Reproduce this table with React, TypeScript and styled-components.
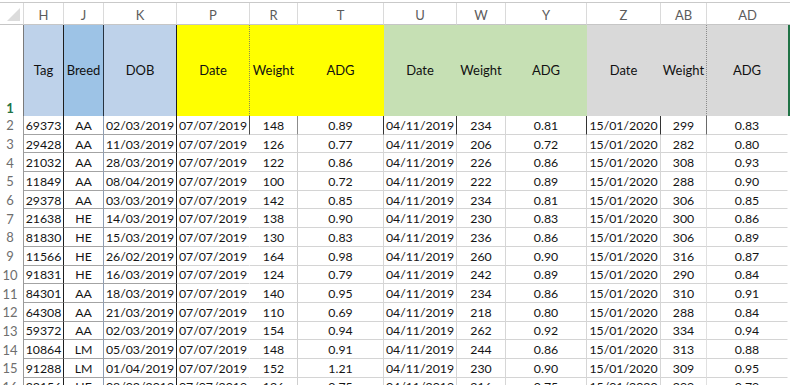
import React from 'react'
import styled, { createGlobalStyle } from 'styled-components'

const GlobalStyle = createGlobalStyle`
    html, body {
        margin: 0;
        padding: 0;
        background: #ffffff;
    }
    body {
        font-family: Lato, "Liberation Sans", sans-serif;
        overflow: hidden;
    }
`;

type Column = {
    letter: string
    title: string
    width: number
    bg: string
    headEdge: string
    bodyEdge: string
    firstEdge: string
    line: string
}

const BLUE = '#bed2ea'
const BLUE_DARK = '#9dc3e6'
const YELLOW = '#ffff00'
const GREEN = '#c6e0b4'
const GREY = '#d9d9d9'

const columns: Column[] = [
    { letter: 'H', title: 'Tag', width: 40, bg: BLUE, headEdge: '1px solid #1e1e1e', bodyEdge: '1px solid #1e1e1e', firstEdge: '1px solid #1e1e1e', line: '#a3a3a3' },
    { letter: 'J', title: 'Breed', width: 40, bg: BLUE_DARK, headEdge: '1px solid #26323f', bodyEdge: '1px solid #8d9db3', firstEdge: '1px solid #8d9db3', line: '#a3a3a3' },
    { letter: 'K', title: 'DOB', width: 73, bg: BLUE, headEdge: '1px solid #1e1e1e', bodyEdge: '1px solid #1e1e1e', firstEdge: '1px solid #1e1e1e', line: '#a3a3a3' },
    { letter: 'P', title: 'Date', width: 73, bg: YELLOW, headEdge: '1px dotted #8a8a55', bodyEdge: '1px solid #ffffff', firstEdge: '1px solid #4a4a4a', line: '#d4d4d4' },
    { letter: 'R', title: 'Weight', width: 48, bg: YELLOW, headEdge: `1px solid ${YELLOW}`, bodyEdge: '1px solid #cfcfcf', firstEdge: '1px solid #8c8c8c', line: '#d4d4d4' },
    { letter: 'T', title: 'ADG', width: 86, bg: YELLOW, headEdge: `1px solid ${YELLOW}`, bodyEdge: '1px solid #d6d6d6', firstEdge: '1px solid #333333', line: '#d4d4d4' },
    { letter: 'U', title: 'Date', width: 73, bg: GREEN, headEdge: `1px solid ${GREEN}`, bodyEdge: '1px solid #d6d6d6', firstEdge: '1px solid #333333', line: '#d4d4d4' },
    { letter: 'W', title: 'Weight', width: 49, bg: GREEN, headEdge: `1px solid ${GREEN}`, bodyEdge: '1px solid #d6d6d6', firstEdge: '1px solid #d6d6d6', line: '#d4d4d4' },
    { letter: 'Y', title: 'ADG', width: 81, bg: GREEN, headEdge: `1px solid ${GREEN}`, bodyEdge: '1px solid #d6d6d6', firstEdge: '1px solid #333333', line: '#d4d4d4' },
    { letter: 'Z', title: 'Date', width: 74, bg: GREY, headEdge: `1px solid ${GREY}`, bodyEdge: '1px solid #d6d6d6', firstEdge: '1px solid #333333', line: '#d4d4d4' },
    { letter: 'AB', title: 'Weight', width: 46, bg: GREY, headEdge: '1px dotted #8a8a8a', bodyEdge: '1px solid #e0e0e0', firstEdge: '1px solid #6a6a6a', line: '#d4d4d4' },
    { letter: 'AD', title: 'ADG', width: 81, bg: GREY, headEdge: `1px solid ${GREY}`, bodyEdge: '1px solid #ffffff', firstEdge: '1px solid #ffffff', line: '#d4d4d4' },
]

const rows: string[][] = [
    ['69373', 'AA', '02/03/2019', '07/07/2019', '148', '0.89', '04/11/2019', '234', '0.81', '15/01/2020', '299', '0.83'],
    ['29428', 'AA', '11/03/2019', '07/07/2019', '126', '0.77', '04/11/2019', '206', '0.72', '15/01/2020', '282', '0.80'],
    ['21032', 'AA', '28/03/2019', '07/07/2019', '122', '0.86', '04/11/2019', '226', '0.86', '15/01/2020', '308', '0.93'],
    ['11849', 'AA', '08/04/2019', '07/07/2019', '100', '0.72', '04/11/2019', '222', '0.89', '15/01/2020', '288', '0.90'],
    ['29378', 'AA', '03/03/2019', '07/07/2019', '142', '0.85', '04/11/2019', '234', '0.81', '15/01/2020', '306', '0.85'],
    ['21638', 'HE', '14/03/2019', '07/07/2019', '138', '0.90', '04/11/2019', '230', '0.83', '15/01/2020', '300', '0.86'],
    ['81830', 'HE', '15/03/2019', '07/07/2019', '130', '0.83', '04/11/2019', '236', '0.86', '15/01/2020', '306', '0.89'],
    ['11566', 'HE', '26/02/2019', '07/07/2019', '164', '0.98', '04/11/2019', '260', '0.90', '15/01/2020', '316', '0.87'],
    ['91831', 'HE', '16/03/2019', '07/07/2019', '124', '0.79', '04/11/2019', '242', '0.89', '15/01/2020', '290', '0.84'],
    ['84301', 'AA', '18/03/2019', '07/07/2019', '140', '0.95', '04/11/2019', '234', '0.86', '15/01/2020', '310', '0.91'],
    ['64308', 'AA', '21/03/2019', '07/07/2019', '110', '0.69', '04/11/2019', '218', '0.80', '15/01/2020', '288', '0.84'],
    ['59372', 'AA', '02/03/2019', '07/07/2019', '154', '0.94', '04/11/2019', '262', '0.92', '15/01/2020', '334', '0.94'],
    ['10864', 'LM', '05/03/2019', '07/07/2019', '148', '0.91', '04/11/2019', '244', '0.86', '15/01/2020', '313', '0.88'],
    ['91288', 'LM', '01/04/2019', '07/07/2019', '152', '1.21', '04/11/2019', '230', '0.90', '15/01/2020', '309', '0.95'],
    ['23156', 'HE', '08/03/2019', '07/07/2019', '126', '0.75', '04/11/2019', '216', '0.75', '15/01/2020', '299', '0.79'],
]

const TopEdge = styled.div`
    height: 3px;
    box-sizing: border-box;
    border-bottom: 1px solid #c9c9c9;
`;

const Sheet = styled.div<{ $cols: string }>`
    display: grid;
    grid-template-columns: ${p => p.$cols};
    grid-template-rows: 22px 91px repeat(${rows.length}, 18.7px);
    font-size: 12.3px;
    color: #141414;
`;

const Corner = styled.div`
    box-sizing: border-box;
    display: flex;
    align-items: flex-end;
    justify-content: flex-end;
    padding: 0 3px 3px 0;
    border-right: 1px solid #d9d9d9;
    border-bottom: 1px solid #c6c6c6;
`;

const CornerTriangle = styled.span`
    width: 0;
    height: 0;
    border-left: 13px solid transparent;
    border-bottom: 13px solid #dcdcdc;
`;

const ColLetter = styled.div<{ $last?: boolean }>`
    box-sizing: border-box;
    display: flex;
    align-items: center;
    justify-content: center;
    padding-top: 2px;
    color: #5c5c5c;
    font-size: 13px;
    border-right: ${p => (p.$last ? 'none' : '1px solid #dadada')};
    border-bottom: 1px solid #c6c6c6;
`;

const RowNum = styled.div<{ $active?: boolean }>`
    box-sizing: border-box;
    display: flex;
    align-items: ${p => (p.$active ? 'flex-end' : 'center')};
    justify-content: center;
    padding-bottom: ${p => (p.$active ? '0' : '0')};
    padding-right: 3px;
    font-size: 13px;
    color: ${p => (p.$active ? '#217346' : '#6e6e6e')};
    font-weight: ${p => (p.$active ? 700 : 400)};
    border-right: 1px solid ${p => (p.$active ? '#7a7a7a' : '#9a9a9a')};
`;

const HeadCell = styled.div<{ $bg: string; $edge: string }>`
    box-sizing: border-box;
    display: flex;
    align-items: center;
    justify-content: center;
    padding-bottom: 1px;
    font-size: 13px;
    background: ${p => p.$bg};
    border-right: ${p => p.$edge};
    color: #111111;
    white-space: nowrap;
`;

const SelectEdge = styled.div`
    background: #217346;
`;

const Cell = styled.div<{ $edge: string; $line: string }>`
    box-sizing: border-box;
    display: flex;
    align-items: center;
    justify-content: center;
    padding-top: 1px;
    border-right: ${p => p.$edge};
    border-bottom: 1px solid ${p => p.$line};
    white-space: nowrap;
    overflow: hidden;
`;

const Blank = styled.div``;

export default function App() {
    const template = ['24px', ...columns.map(c => `${c.width}px`), '2px'].join(' ')

    return (
        <>
            <GlobalStyle />
            <TopEdge />
            <Sheet $cols={template}>
                <Corner>
                    <CornerTriangle />
                </Corner>
                {columns.map((c, i) => (
                    <ColLetter key={c.letter} $last={i === columns.length - 1}>{c.letter}</ColLetter>
                ))}
                <ColLetter $last />

                <RowNum $active>1</RowNum>
                {columns.map(c => (
                    <HeadCell key={c.letter} $bg={c.bg} $edge={c.headEdge}>{c.title}</HeadCell>
                ))}
                <SelectEdge />

                {rows.map((row, r) => (
                    <React.Fragment key={r}>
                        <RowNum>{r + 2}</RowNum>
                        {row.map((value, i) => (
                            <Cell
                                key={i}
                                $edge={r === 0 ? columns[i].firstEdge : columns[i].bodyEdge}
                                $line={columns[i].line}
                            >
                                {value}
                            </Cell>
                        ))}
                        <Blank />
                    </React.Fragment>
                ))}
            </Sheet>
        </>
    )
}
